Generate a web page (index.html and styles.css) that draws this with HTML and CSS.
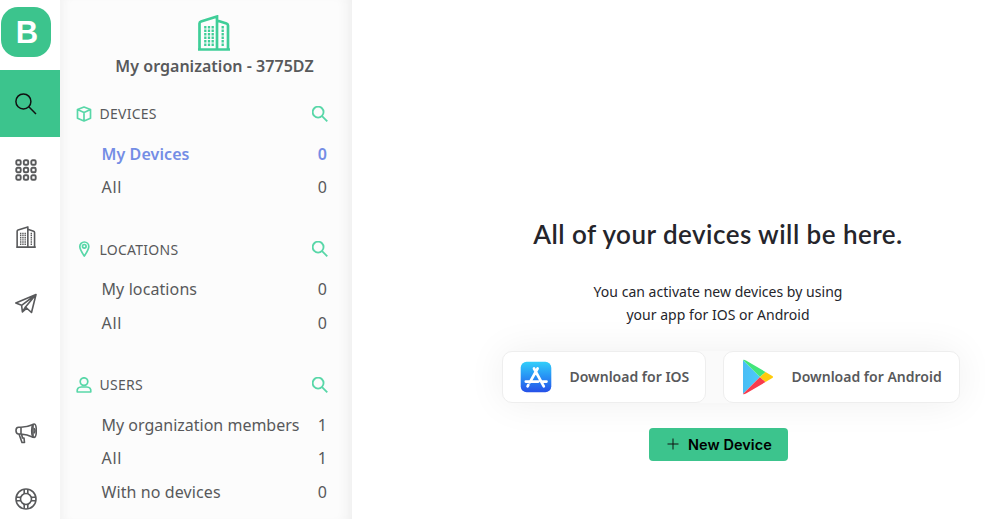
FILE: index.html
```html
<!DOCTYPE html>
<html lang="en">
<head>
<meta charset="utf-8">
<title>Devices</title>
<link rel="stylesheet" href="styles.css">
</head>
<body>
<svg class="defs" aria-hidden="true">
  <symbol id="search" viewBox="0 0 22 22"><circle cx="8.4" cy="8.4" r="7.5"/><path d="M13.8 13.8 21 21"/></symbol>
  <symbol id="building" viewBox="0 0 34 36"><path d="M1 34.5h32M2.5 34V8.5Q2.5 7 4 6.4L20 1.500V34M20 5.500l9.500 3Q31 9 31 10.500V34"/><path class="windows" d="M8.300 11v20M12 11v20M15.700 11v20M25.700 11v20"/></symbol>
</svg>
<div class="app">
  <nav class="rail">
    <div class="logo"><span>B</span></div>
    <a class="rail-item active"><svg class="icon-lg"><use href="#search"/></svg></a>
    <a class="rail-item"><svg class="icon-lg apps" viewBox="0 0 22 22"><g id="r"><rect x="1.300" y="1.300" width="4.400" height="4.400" rx="1.300"/><rect x="8.800" y="1.300" width="4.400" height="4.400" rx="1.300"/><rect x="16.300" y="1.300" width="4.400" height="4.400" rx="1.300"/></g><use href="#r" y="7.500"/><use href="#r" y="15"/></svg></a>
    <a class="rail-item"><svg class="icon-lg building-sm"><use href="#building"/></svg></a>
    <a class="rail-item plane"><svg class="icon-lg" viewBox="0 0 22 22"><path d="M21 1.500.8 10l5.800 2.300L21 1.500 10.500 14l6 5.500L21 1.500M6.600 12.300l.8 6.700 3.100-5M7.400 19l4.400-3.800"/></svg></a>
    <a class="rail-item push"><svg class="icon-lg" viewBox="0 0 22 22"><path d="M6 4.200H3.500Q1 4.200 1 7.500t2.500 3.500H6zM6 4.200Q12 4.200 18 1.500v12.700Q12 11.500 6 11M4 11l3 8.500h2.500L9 15H7.500L6.500 11"/><ellipse cx="19" cy="7.700" rx="2.300" ry="6.700"/><path d="M19 5.200q2 2.500 0 5"/></svg></a>
    <a class="rail-item"><svg class="icon-lg" viewBox="0 0 22 22"><circle cx="11" cy="11" r="10"/><circle cx="11" cy="11" r="5.500"/><path d="M9.200 1.200v4.700M12.800 1.200v4.700M9.200 16.100v4.700M12.800 16.100v4.700M1.200 9.200h4.700M1.200 12.800h4.700M16.100 9.200h4.700M16.100 12.800h4.700"/></svg></a>
  </nav>
  <aside class="sidebar">
    <header class="org">
      <svg class="org-icon"><use href="#building"/></svg>
      <h2>My organization - 3775DZ</h2>
    </header>
    <section>
      <h3><svg class="icon-sm" viewBox="0 0 16 16"><path d="M8 1l6.500 2.500v8.700L8 15l-6.500-2.800V3.500zM1.500 3.500 8 6.500l6.500-3M8 6.500V15"/></svg><span>DEVICES</span><svg class="icon-sm find"><use href="#search"/></svg></h3>
      <ul>
        <li class="current"><span>My Devices</span><b>0</b></li>
        <li><span class="all">All</span><b>0</b></li>
      </ul>
    </section>
    <section>
      <h3><svg class="icon-sm" viewBox="0 0 16 16"><path d="M8.300 15Q3.800 8.500 3.800 5.500a4.500 4.500 0 0 1 9 0q0 3-4.500 9.500z"/><circle cx="8.300" cy="5.300" r="1.800"/></svg><span>LOCATIONS</span><svg class="icon-sm find"><use href="#search"/></svg></h3>
      <ul>
        <li><span>My locations</span><b>0</b></li>
        <li><span class="all">All</span><b>0</b></li>
      </ul>
    </section>
    <section>
      <h3><svg class="icon-sm" viewBox="0 0 16 16"><circle cx="8" cy="4.600" r="3.800"/><path d="M1.200 15q-.5-5 4-5h5.600q4.500 0 4 5z"/></svg><span>USERS</span><svg class="icon-sm find"><use href="#search"/></svg></h3>
      <ul>
        <li><span class="members">My organization members</span><b>1</b></li>
        <li><span class="all">All</span><b>1</b></li>
        <li><span>With no devices</span><b>0</b></li>
      </ul>
    </section>
  </aside>
  <main>
    <h1>All of your devices will be here.</h1>
    <p>You can activate new devices by using<br>your app for IOS or Android</p>
    <div class="stores">
      <a class="store ios">
        <svg viewBox="0 0 32 32"><defs><linearGradient id="sky" x2="0" y2="1"><stop stop-color="#32cffa"/><stop offset=".45" stop-color="#2896f5"/><stop offset="1" stop-color="#2650e8"/></linearGradient></defs><rect x=".7" y=".7" width="30.600" height="30.600" rx="6" fill="url(#sky)"/><path d="M17.600 7.500 9.800 21.300M8.300 24l-.7 1.300M14 7.500l9.800 17.800M5.800 20.600h12.500M22.500 20.600h4" fill="none" stroke="#fff" stroke-width="2.700" stroke-linecap="round"/></svg>
        <span>Download for IOS</span>
      </a>
      <a class="store android">
        <svg viewBox="0 0 32 36"><defs><linearGradient id="blue"><stop stop-color="#49bdf5"/><stop offset="1" stop-color="#4bcafa"/></linearGradient></defs><path fill="url(#blue)" d="M1 1v34l17-17z"/><path fill="#42e57b" d="M1 1Q2 .3 4 1.500L23.500 13 18 18z"/><path fill="#f83b4d" d="M1 35q1 .7 3-.5L23.500 23 18 18z"/><path fill="#ffcb0b" d="m23.500 13 6.800 4q1.500 1 0 2l-6.800 4-5.500-5z"/></svg>
        <span>Download for Android</span>
      </a>
    </div>
    <button><svg viewBox="0 0 12 12"><path d="M6 .5v11M.5 6h11"/></svg><span>New Device</span></button>
  </main>
</div>
</body>
</html>
```
FILE: styles.css
```css
* { box-sizing: border-box; }
body { margin: 0; overflow: hidden; background: #fff; color: #58595b; font-family: "Noto Sans", sans-serif; }
h1, h2, h3, p, ul { margin: 0; padding: 0; }
svg { flex: none; }
.defs { display: block; width: 0; height: 0; }
.app { display: flex; width: 985px; height: 519px; }
.rail { display: flex; flex-direction: column; width: 60px; }
.logo { display: grid; place-items: center; flex: none; width: 50px; height: 50px; margin: 7px 0 13px 1px; border-radius: 17px; background: #3cc48d; color: #fff; font: bold 31px/50px "Liberation Sans", sans-serif; padding: 1px 0 0 2px; }
.rail-item { display: flex; align-items: center; flex: none; height: 66.500px; padding-left: 15px; color: #58595b; }
.rail-item.active { background: #3cc48d; color: #111; height: 67px; }
.rail-item.plane { padding-top: 2px; }
.rail-item.push { margin-top: 63px; padding-top: 3px; }
.icon-lg { width: 22px; height: 22px; fill: none; stroke: currentColor; stroke-width: 1.600; stroke-linejoin: round; }
.apps { stroke-width: 1.900; }
.active .icon-lg { stroke-width: 1.500; }
.building-sm { stroke-width: 2.600; }
.windows { stroke-width: 2.300; stroke-dasharray: 2.400 1.100; }
.sidebar { width: 292px; background: #fcfcfc; box-shadow: inset 10px 0 12px -9px #eee, inset -12px 0 14px -10px #eaeaea; }
.org { display: flex; flex-direction: column; align-items: center; height: 93px; padding: 15px 0 0 17px; }
.org-icon { width: 34px; height: 36px; fill: none; stroke: #3fce98; stroke-width: 2.700; margin-right: 2px; }
.org h2 { font-size: 16px; line-height: 30px; font-weight: 600; letter-spacing: .03px; white-space: nowrap; }
section { height: 135.700px; padding: 0 24px 0 16px; }
h3 { display: flex; align-items: center; height: 41px; font-size: 14px; font-weight: 400; letter-spacing: .25px; }
h3 span { margin-left: 7.500px; }
.icon-sm { width: 16px; height: 16px; fill: none; stroke: #58d7a8; stroke-width: 1.700; stroke-linejoin: round; }
.find { margin-left: auto; stroke-width: 2.500; }
ul { list-style: none; padding: 3px 0 0 25.500px; }
li { display: flex; justify-content: space-between; align-items: center; height: 33.300px; font-size: 16px; line-height: 24px; letter-spacing: .1px; white-space: nowrap; }
.members { letter-spacing: 0; }
.all { letter-spacing: .7px; }
li b { font-weight: inherit; width: 11px; text-align: center; }
.current { color: #748de5; font-weight: 600; }
main { display: flex; flex: 1; flex-direction: column; align-items: center; padding: 216px 0 0 99px; color: #25252b; }
h1 { font: 600 26px/36px Lato, sans-serif; letter-spacing: .46px; white-space: nowrap; }
p { margin-top: 28px; font-size: 14px; line-height: 23px; letter-spacing: .03px; text-align: center; white-space: nowrap; }
.stores { display: flex; gap: 17px; margin-top: 25px; margin-left: 26px; border-radius: 12px; background: #fafafa; box-shadow: 0 0 38px rgba(0,0,0,.065); }
.store { display: flex; align-items: center; height: 52px; border: 1px solid #eee; border-radius: 10px; background: #fff; color: #58595b; font-size: 14px; font-weight: 600; white-space: nowrap; }
.store span { padding-bottom: 2px; }
.ios { width: 204px; padding-left: 17px; }
.ios svg { width: 32px; height: 32px; margin-right: 17.500px; }
.android { width: 237px; padding-left: 18px; }
.android svg { width: 32px; height: 36px; margin-right: 17.500px; }
button { display: flex; align-items: center; width: 139px; height: 33px; margin-top: 25px; padding: 0 0 0 18px; border: 0; border-radius: 4px; background: #3cc48d; color: #000; font: 600 14.500px Inter, sans-serif; letter-spacing: .05px; white-space: nowrap; }
button svg { width: 12px; height: 12px; margin: 0 9.500px 2px 0; fill: none; stroke: #111; }
```
